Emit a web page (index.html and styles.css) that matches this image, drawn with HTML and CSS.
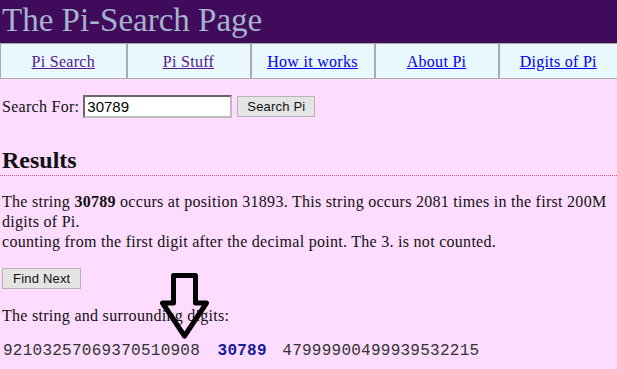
FILE: index.html
```html
<!DOCTYPE html>
<html lang="en">
<head>
    <meta charset="UTF-8">
    <title>The Pi-Search Page</title>
    <link rel="stylesheet" href="styles.css">
</head>
<body>
    <div class="header">The Pi-Search Page</div>
    <table class="nav">
        <colgroup>
            <col class="col-first">
            <col class="col-mid">
            <col class="col-mid">
            <col class="col-mid">
            <col>
        </colgroup>
        <tr>
            <td><a class="visited" href="#">Pi Search</a></td>
            <td><a class="visited" href="#">Pi Stuff</a></td>
            <td><a href="#">How it works</a></td>
            <td><a href="#">About Pi</a></td>
            <td><a href="#">Digits of Pi</a></td>
        </tr>
    </table>

    <div class="content">
        <form class="search-form">
            <label for="search-input">Search For:</label>
            <input type="text" id="search-input" value="30789">
            <button type="button">Search Pi</button>
        </form>

        <h2 class="results-title">Results</h2>

        <p class="result-text">
            The string <b>30789</b> occurs at position 31893. This string occurs 2081 times in the first 200M digits of Pi.<br>
            counting from the first digit after the decimal point. The 3. is not counted.
        </p>

        <button type="button" class="find-next">Find Next</button>

        <div class="surround">
            <p class="surround-label">The string and surrounding digits:</p>
            <div class="digits">92103257069370510908<span class="match">30789</span>47999900499939532215</div>
            <svg class="arrow" width="54" height="70" viewBox="0 0 54 70">
                <path d="M15.5 4.5 H37.5 V32 H48.5 L26.5 65 L4.5 32 H15.5 Z" fill="none" stroke="#000" stroke-width="5" stroke-linejoin="round"/>
            </svg>
        </div>
    </div>
</body>
</html>
```

FILE: styles.css
```css
body {
    margin: 0;
    padding: 0;
    background-color: #fedcff;
    font-family: "Liberation Serif", "Times New Roman", serif;
    font-size: 16px;
    letter-spacing: 0.28px;
    color: #111;
}
.header {
    background-color: #3f0b5a;
    color: #a7b2cd;
    font-size: 33px;
    letter-spacing: 0;
    height: 43px;
    line-height: 40px;
    padding-left: 2px;
}
.nav {
    width: 100%;
    border-collapse: collapse;
    background-color: #e9f7ff;
    table-layout: fixed;
}
.col-first {
    width: 126px;
}
.col-mid {
    width: 124px;
}
.nav td {
    border: 1px solid #aaa;
    border-right-width: 2px;
    height: 33px;
    padding: 0;
    padding-top: 1px;
    text-align: center;
}
.nav td:last-child {
    border-right: none;
}
.nav a {
    color: #0000ee;
}
.nav a.visited {
    color: #551a8b;
}
.content {
    padding: 0 2px;
}
.search-form {
    display: flex;
    align-items: center;
    gap: 4px;
    margin-top: 16px;
}
.search-form input {
    width: 141px;
    height: 17px;
    padding: 1px 2px;
    border: 2px inset #bbb;
    font-family: "Liberation Sans", Arial, sans-serif;
    font-size: 15px;
    letter-spacing: 0;
    margin: 0;
}
button {
    font-family: "Liberation Sans", Arial, sans-serif;
    font-size: 13px;
    letter-spacing: 0.2px;
    background-color: #e4e4e4;
    border: 1px solid #b5b5b5;
    padding: 2px 9px;
    height: 21px;
    margin: 0;
    color: #111;
}
.search-form button {
    margin-left: 1px;
}
.results-title {
    font-size: 24px;
    letter-spacing: 0;
    margin: 28px -2px 0;
    padding: 0 0 1px 2px;
    line-height: 28px;
    border-bottom: 1px dotted #e8577a;
}
.result-text {
    margin: 16px 0 0;
    line-height: 20px;
}
.find-next {
    margin-top: 16px;
    padding: 2px 10px;
}
.surround {
    position: relative;
}
.surround-label {
    margin: 17px 0 0;
    line-height: 20px;
}
.digits {
    margin-top: 16px;
    font-family: "Liberation Mono", "Courier New", monospace;
    font-size: 16px;
    letter-spacing: 0.25px;
    color: #333;
    padding-left: 1px;
}
.match {
    color: #1a1a9c;
    font-weight: bold;
    margin: 0 15.5px 0 17.5px;
}
.arrow {
    position: absolute;
    left: 156px;
    top: -35px;
}
```
